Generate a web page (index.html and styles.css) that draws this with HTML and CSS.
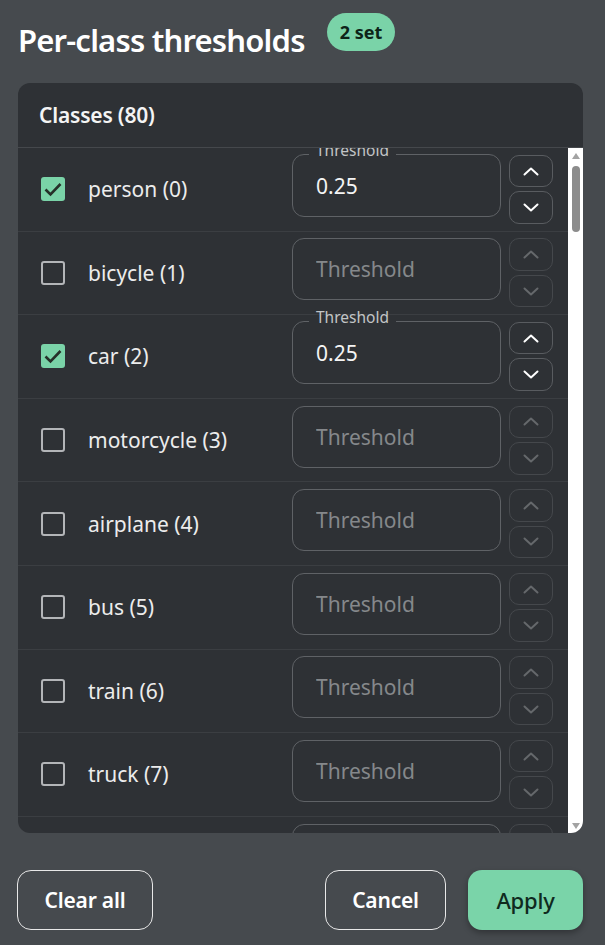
FILE: index.html
```html
<!DOCTYPE html>
<html lang="en">
<head>
<meta charset="utf-8">
<title>Per-class thresholds</title>
<link rel="stylesheet" href="styles.css">
</head>
<body>
<div class="page">
  <div class="title-row">
    <h1 class="title">Per-class thresholds</h1>
    <span class="badge">2 set</span>
  </div>

  <section class="card">
    <div class="card-header">Classes (80)</div>
    <div class="list-wrap">
      <div class="rows">

        <div class="row">
          <span class="check on"><svg viewBox="0 0 24 24"><path d="M4.5 12.5 9.5 17.5 19.5 7"/></svg></span>
          <span class="name">person (0)</span>
          <div class="field filled">
            <fieldset class="outline"><legend>Threshold</legend></fieldset>
            <input class="input" value="0.25">
          </div>
          <div class="spin">
            <button class="spin-btn"><svg viewBox="0 0 16 9"><polyline points="1.5,7.5 8,1.5 14.5,7.5"/></svg></button>
            <button class="spin-btn"><svg viewBox="0 0 16 9"><polyline points="1.5,1.5 8,7.5 14.5,1.5"/></svg></button>
          </div>
        </div>

        <div class="row">
          <span class="check"></span>
          <span class="name">bicycle (1)</span>
          <div class="field">
            <fieldset class="outline"></fieldset>
            <input class="input" placeholder="Threshold">
          </div>
          <div class="spin off">
            <button class="spin-btn"><svg viewBox="0 0 16 9"><polyline points="1.5,7.5 8,1.5 14.5,7.5"/></svg></button>
            <button class="spin-btn"><svg viewBox="0 0 16 9"><polyline points="1.5,1.5 8,7.5 14.5,1.5"/></svg></button>
          </div>
        </div>

        <div class="row">
          <span class="check on"><svg viewBox="0 0 24 24"><path d="M4.5 12.5 9.5 17.5 19.5 7"/></svg></span>
          <span class="name">car (2)</span>
          <div class="field filled">
            <fieldset class="outline"><legend>Threshold</legend></fieldset>
            <input class="input" value="0.25">
          </div>
          <div class="spin">
            <button class="spin-btn"><svg viewBox="0 0 16 9"><polyline points="1.5,7.5 8,1.5 14.5,7.5"/></svg></button>
            <button class="spin-btn"><svg viewBox="0 0 16 9"><polyline points="1.5,1.5 8,7.5 14.5,1.5"/></svg></button>
          </div>
        </div>

        <div class="row">
          <span class="check"></span>
          <span class="name">motorcycle (3)</span>
          <div class="field">
            <fieldset class="outline"></fieldset>
            <input class="input" placeholder="Threshold">
          </div>
          <div class="spin off">
            <button class="spin-btn"><svg viewBox="0 0 16 9"><polyline points="1.5,7.5 8,1.5 14.5,7.5"/></svg></button>
            <button class="spin-btn"><svg viewBox="0 0 16 9"><polyline points="1.5,1.5 8,7.5 14.5,1.5"/></svg></button>
          </div>
        </div>

        <div class="row">
          <span class="check"></span>
          <span class="name">airplane (4)</span>
          <div class="field">
            <fieldset class="outline"></fieldset>
            <input class="input" placeholder="Threshold">
          </div>
          <div class="spin off">
            <button class="spin-btn"><svg viewBox="0 0 16 9"><polyline points="1.5,7.5 8,1.5 14.5,7.5"/></svg></button>
            <button class="spin-btn"><svg viewBox="0 0 16 9"><polyline points="1.5,1.5 8,7.5 14.5,1.5"/></svg></button>
          </div>
        </div>

        <div class="row">
          <span class="check"></span>
          <span class="name">bus (5)</span>
          <div class="field">
            <fieldset class="outline"></fieldset>
            <input class="input" placeholder="Threshold">
          </div>
          <div class="spin off">
            <button class="spin-btn"><svg viewBox="0 0 16 9"><polyline points="1.5,7.5 8,1.5 14.5,7.5"/></svg></button>
            <button class="spin-btn"><svg viewBox="0 0 16 9"><polyline points="1.5,1.5 8,7.5 14.5,1.5"/></svg></button>
          </div>
        </div>

        <div class="row">
          <span class="check"></span>
          <span class="name">train (6)</span>
          <div class="field">
            <fieldset class="outline"></fieldset>
            <input class="input" placeholder="Threshold">
          </div>
          <div class="spin off">
            <button class="spin-btn"><svg viewBox="0 0 16 9"><polyline points="1.5,7.5 8,1.5 14.5,7.5"/></svg></button>
            <button class="spin-btn"><svg viewBox="0 0 16 9"><polyline points="1.5,1.5 8,7.5 14.5,1.5"/></svg></button>
          </div>
        </div>

        <div class="row">
          <span class="check"></span>
          <span class="name">truck (7)</span>
          <div class="field">
            <fieldset class="outline"></fieldset>
            <input class="input" placeholder="Threshold">
          </div>
          <div class="spin off">
            <button class="spin-btn"><svg viewBox="0 0 16 9"><polyline points="1.5,7.5 8,1.5 14.5,7.5"/></svg></button>
            <button class="spin-btn"><svg viewBox="0 0 16 9"><polyline points="1.5,1.5 8,7.5 14.5,1.5"/></svg></button>
          </div>
        </div>

        <div class="row">
          <span class="check"></span>
          <span class="name">boat (8)</span>
          <div class="field">
            <fieldset class="outline"></fieldset>
            <input class="input" placeholder="Threshold">
          </div>
          <div class="spin off">
            <button class="spin-btn"><svg viewBox="0 0 16 9"><polyline points="1.5,7.5 8,1.5 14.5,7.5"/></svg></button>
            <button class="spin-btn"><svg viewBox="0 0 16 9"><polyline points="1.5,1.5 8,7.5 14.5,1.5"/></svg></button>
          </div>
        </div>

      </div>
      <div class="scrollbar">
        <span class="sb-up"></span>
        <span class="sb-thumb"></span>
        <span class="sb-space"></span>
        <span class="sb-down"></span>
      </div>
    </div>
  </section>

  <div class="actions">
    <button class="btn ghost">Clear all</button>
    <span class="grow"></span>
    <button class="btn ghost cancel">Cancel</button>
    <button class="btn primary">Apply</button>
  </div>
</div>
</body>
</html>
```

FILE: styles.css
```css
* { box-sizing: border-box; }

html, body {
  margin: 0;
  padding: 0;
  background: #464a4e;
  color: #f1f1f1;
  font-family: "Noto Sans", "Open Sans", sans-serif;
}

.page {
  width: 605px;
  height: 945px;
  padding: 13px 22px 0 18px;
}

.title-row {
  display: flex;
  align-items: flex-start;
  gap: 22px;
}

.title {
  margin: 0;
  font-size: 31px;
  line-height: 54px;
  font-weight: 600;
  letter-spacing: -0.8px;
  color: #ffffff;
}

.badge {
  height: 38px;
  padding: 0 13px;
  border-radius: 19px;
  background: #7ad3a8;
  color: #0d2419;
  font-size: 18px;
  font-weight: 700;
  line-height: 38px;
}

.card {
  margin-top: 16px;
  height: 750px;
  background: #2e3135;
  border-radius: 12px;
  overflow: hidden;
  display: flex;
  flex-direction: column;
}

.card-header {
  height: 65px;
  flex: none;
  padding-left: 21px;
  display: flex;
  align-items: center;
  font-size: 21px;
  font-weight: 600;
  letter-spacing: -0.2px;
  color: #f4f4f4;
  border-bottom: 1px solid #45484c;
}

.list-wrap {
  flex: 1;
  display: flex;
  min-height: 0;
}

.rows {
  flex: 1;
  overflow: hidden;
}

.row {
  height: 83.6px;
  display: flex;
  align-items: center;
  padding: 0 15px 0 23px;
  border-bottom: 1px solid #3b3e42;
}

.check {
  width: 24px;
  height: 24px;
  flex: none;
  border: 2px solid #b3b5b8;
  border-radius: 3px;
}

.check.on {
  border: none;
  background: #7ad3a8;
}

.check svg {
  display: block;
  width: 24px;
  height: 24px;
  fill: none;
  stroke: #263029;
  stroke-width: 2.6;
}

.name {
  flex: 1;
  margin-left: 23px;
  font-size: 21px;
  color: #ececec;
}

.field {
  position: relative;
  width: 209px;
  height: 62px;
  margin-bottom: 7px;
  flex: none;
}

.outline {
  position: absolute;
  top: 0;
  left: 0;
  right: 0;
  bottom: 0;
  margin: 0;
  padding: 0 0 0 16px;
  border: 1px solid #5f6266;
  border-radius: 12px;
  pointer-events: none;
  min-width: 0;
}

.filled .outline {
  top: -13px;
}

.outline legend {
  padding: 0 7px 10px;
  font-size: 15.5px;
  line-height: 16px;
  color: #c2c4c6;
}

.input {
  width: 100%;
  height: 100%;
  border: none;
  background: transparent;
  padding: 0 0 0 24px;
  font-family: inherit;
  font-size: 21px;
  color: #f4f4f4;
  outline: none;
}

.input::placeholder {
  color: #85888b;
}

.spin {
  margin-left: 8px;
  display: flex;
  flex-direction: column;
  gap: 4px;
  flex: none;
}

.spin-btn {
  width: 44px;
  height: 32.5px;
  padding: 0;
  border: 1px solid #595c60;
  border-radius: 10px;
  background: transparent;
  display: flex;
  align-items: center;
  justify-content: center;
}

.spin-btn svg {
  width: 16px;
  height: 9px;
  fill: none;
  stroke: #ffffff;
  stroke-width: 2;
  stroke-linecap: round;
  stroke-linejoin: round;
}

.spin.off .spin-btn {
  border-color: #45484c;
}

.spin.off .spin-btn svg {
  stroke: #65686b;
}

.scrollbar {
  width: 15px;
  flex: none;
  background: #ffffff;
  display: flex;
  flex-direction: column;
  align-items: center;
  padding: 5px 0 4px;
}

.sb-up {
  width: 0;
  height: 0;
  border-left: 4.5px solid transparent;
  border-right: 4.5px solid transparent;
  border-bottom: 6px solid #a3a3a3;
}

.sb-thumb {
  margin-top: 7px;
  width: 8px;
  height: 66px;
  border-radius: 4px;
  background: #8c8c8c;
}

.sb-space {
  flex: 1;
}

.sb-down {
  width: 0;
  height: 0;
  border-left: 4.5px solid transparent;
  border-right: 4.5px solid transparent;
  border-top: 6px solid #a3a3a3;
}

.actions {
  display: flex;
  align-items: center;
  margin: 37px 0 0 -1px;
  gap: 22px;
}

.grow {
  flex: 1;
}

.btn {
  height: 60px;
  border-radius: 14px;
  font-family: inherit;
  font-size: 21px;
  font-weight: 600;
  letter-spacing: -0.2px;
  padding: 0;
}

.ghost {
  width: 136px;
  background: transparent;
  border: 1.5px solid #e8e8e8;
  color: #ffffff;
}

.ghost.cancel {
  width: 121px;
}

.primary {
  width: 115px;
  border: none;
  background: #7ad4a9;
  color: #0f2a1e;
  font-size: 22px;
  font-weight: 500;
  box-shadow: 0 3px 6px rgba(0, 0, 0, 0.3);
}
```
